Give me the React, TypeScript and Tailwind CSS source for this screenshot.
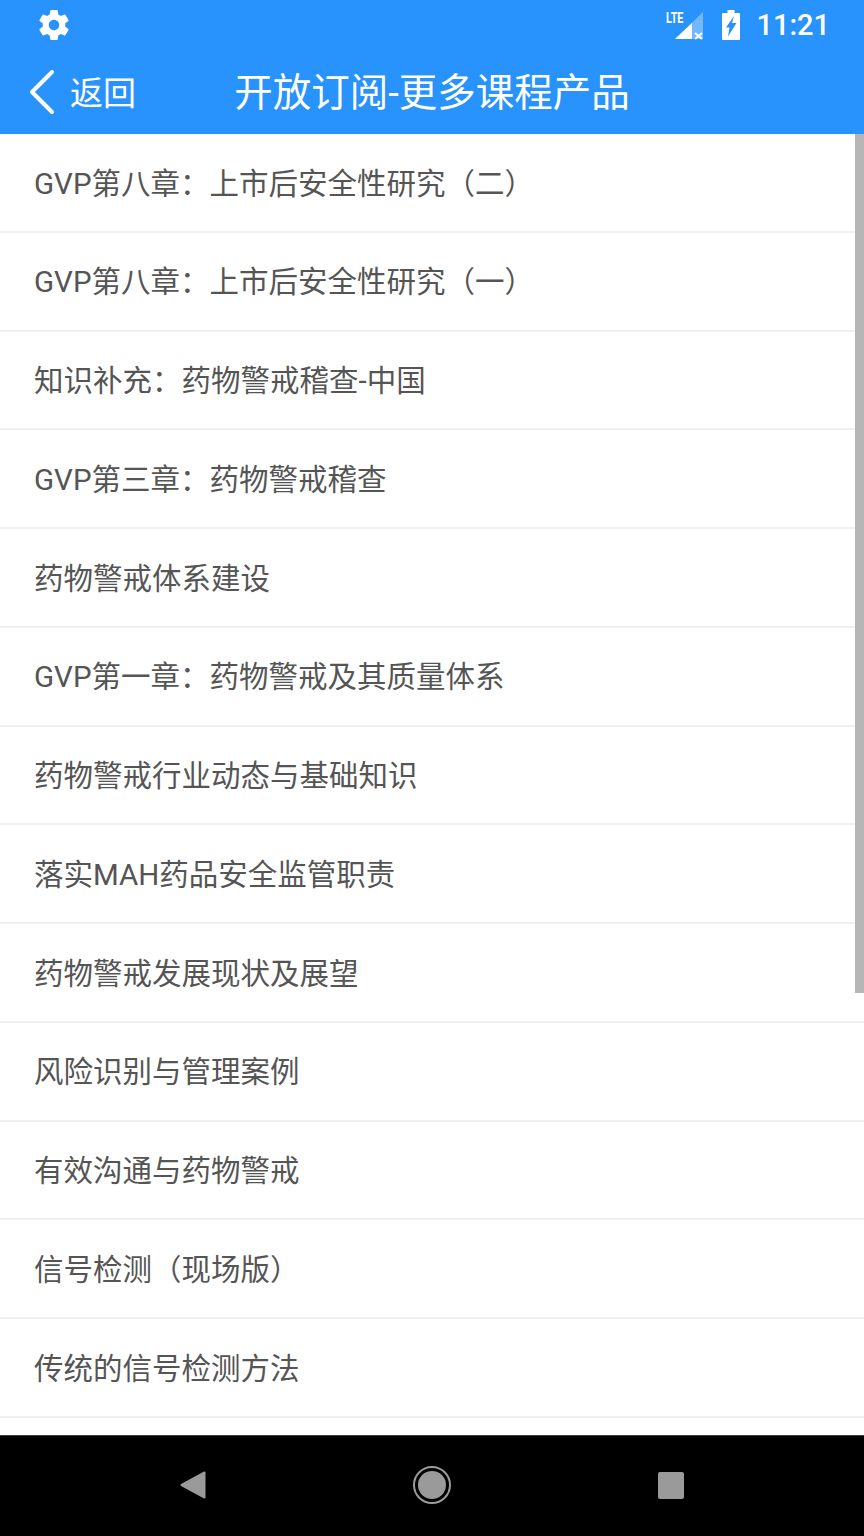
import React from 'react';

const courses = [
  'GVP第八章\uFF1A上市后安全性研究\uFF08二\uFF09',
  'GVP第八章\uFF1A上市后安全性研究\uFF08一\uFF09',
  '知识补充\uFF1A药物警戒稽查-中国',
  'GVP第三章\uFF1A药物警戒稽查',
  '药物警戒体系建设',
  'GVP第一章\uFF1A药物警戒及其质量体系',
  '药物警戒行业动态与基础知识',
  '落实MAH药品安全监管职责',
  '药物警戒发展现状及展望',
  '风险识别与管理案例',
  '有效沟通与药物警戒',
  '信号检测\uFF08现场版\uFF09',
  '传统的信号检测方法',
];

const StatusBar: React.FC = () => (
  <div className="h-[50px] flex items-center justify-between pl-[36px] pr-[34px]">
    <svg viewBox="0 0 24 24" className="w-[36px] h-[36px]" fill="#fff">
      <path
        fillRule="evenodd"
        d="M19.43 12.98c.04-.32.07-.64.07-.98s-.03-.66-.07-.98l2.11-1.65c.19-.15.24-.42.12-.64l-2-3.46c-.12-.22-.39-.3-.61-.22l-2.49 1c-.52-.4-1.08-.73-1.69-.98l-.38-2.65C14.46 2.18 14.25 2 14 2h-4c-.25 0-.46.18-.49.42l-.38 2.65c-.61.25-1.17.59-1.69.98l-2.49-1c-.23-.09-.49 0-.61.22l-2 3.46c-.13.22-.07.49.12.64l2.11 1.65c-.04.32-.07.65-.07.98s.03.66.07.98l-2.11 1.65c-.19.15-.24.42-.12.64l2 3.46c.12.22.39.3.61.22l2.49-1c.52.4 1.08.73 1.69.98l.38 2.65c.03.24.24.42.49.42h4c.25 0 .46-.18.49-.42l.38-2.65c.61-.25 1.17-.59 1.69-.98l2.49 1c.23.09.49 0 .61-.22l2-3.46c.12-.22.07-.49-.12-.64l-2.11-1.65zM12 15.5c-1.93 0-3.5-1.57-3.5-3.5s1.57-3.5 3.5-3.5 3.5 1.57 3.5 3.5-1.57 3.5-3.5 3.5z"
      />
    </svg>
    <div className="flex items-center">
      <div className="relative w-[38px] h-[30px]">
        <svg viewBox="0 0 38 30" className="w-[38px] h-[30px]">
          <polygon points="9,29 37,2 37,29" fill="#fff" fillOpacity="0.35" />
          <polygon points="9,29 26,13 26,29" fill="#fff" />
          <path d="M29 23 L36 29 M36 23 L29 29" stroke="#fff" strokeWidth="2" />
        </svg>
        <span className="absolute left-0 top-0 text-[15px] leading-[16px] font-bold text-white font-['Roboto',sans-serif] scale-x-[0.72] origin-left">
          LTE
        </span>
      </div>
      <svg viewBox="0 0 18 30" className="w-[18px] h-[30px] ml-[18px]">
        <path
          fillRule="evenodd"
          fill="#fff"
          d="M5.5 0 H12.5 V3 H17 A1 1 0 0 1 18 4 V29 A1 1 0 0 1 17 30 H1 A1 1 0 0 1 0 29 V4 A1 1 0 0 1 1 3 H5.5 Z M12 6 L4 17.5 H7.5 L6 26.5 L14.5 13 H10 Z"
        />
      </svg>
      <span className="ml-[16px] text-[29px] leading-none font-medium text-white font-['Roboto',sans-serif]">
        11:21
      </span>
    </div>
  </div>
);

const Toolbar: React.FC = () => (
  <div className="h-[84px] grid grid-cols-[1fr_auto_1fr] items-center pt-[3px]">
    <div className="flex items-center pl-[28px]">
      <svg viewBox="0 0 27 46" className="w-[27px] h-[46px] -mt-[4px]" fill="none">
        <path d="M24 3 L4 23 L24 43" stroke="#fff" strokeWidth="4" strokeLinecap="round" strokeLinejoin="round" />
      </svg>
      <span className="ml-[15px] text-[33px] leading-none text-white">返回</span>
    </div>
    <h1 className="text-[38.5px] leading-none font-normal text-white whitespace-nowrap">开放订阅-更多课程产品</h1>
    <div />
  </div>
);

const NavBar: React.FC = () => (
  <div className="h-[101px] shrink-0 bg-black border-t border-[#3a3a3a] flex items-center justify-between pl-[180px] pr-[180px] pb-[2px]">
    <svg viewBox="0 0 26 28" className="w-[26px] h-[28px]">
      <path
        d="M24.5 1.5 V26.5 L1.5 14 Z"
        fill="#9a9a9a"
        stroke="#9a9a9a"
        strokeWidth="2"
        strokeLinejoin="round"
      />
    </svg>
    <div className="w-[38px] h-[38px] rounded-full border-[2px] border-[#9a9a9a] flex items-center justify-center">
      <div className="w-[28px] h-[28px] rounded-full bg-[#9a9a9a]" />
    </div>
    <div className="w-[26px] h-[27px] rounded-[2px] bg-[#9a9a9a]" />
  </div>
);

export default function App() {
  return (
    <div className="w-[864px] h-[1536px] flex flex-col bg-white overflow-hidden font-['Roboto','Noto_Sans_CJK_SC',sans-serif]">
      <header className="shrink-0 bg-[#2892fd]">
        <StatusBar />
        <Toolbar />
      </header>
      <main className="relative flex-1 min-h-0 overflow-hidden">
        <ul>
          {courses.map((name) => (
            <li
              key={name}
              className="h-[98.75px] flex items-center pl-[34px] pt-[4px] border-b-2 border-[#f0f0f0] text-[29.5px] leading-none text-[#555555]"
            >
              {name}
            </li>
          ))}
        </ul>
        <div className="absolute right-0 top-0 w-[9px] h-[859px] bg-[#b6b6b6]" />
      </main>
      <NavBar />
    </div>
  );
}
